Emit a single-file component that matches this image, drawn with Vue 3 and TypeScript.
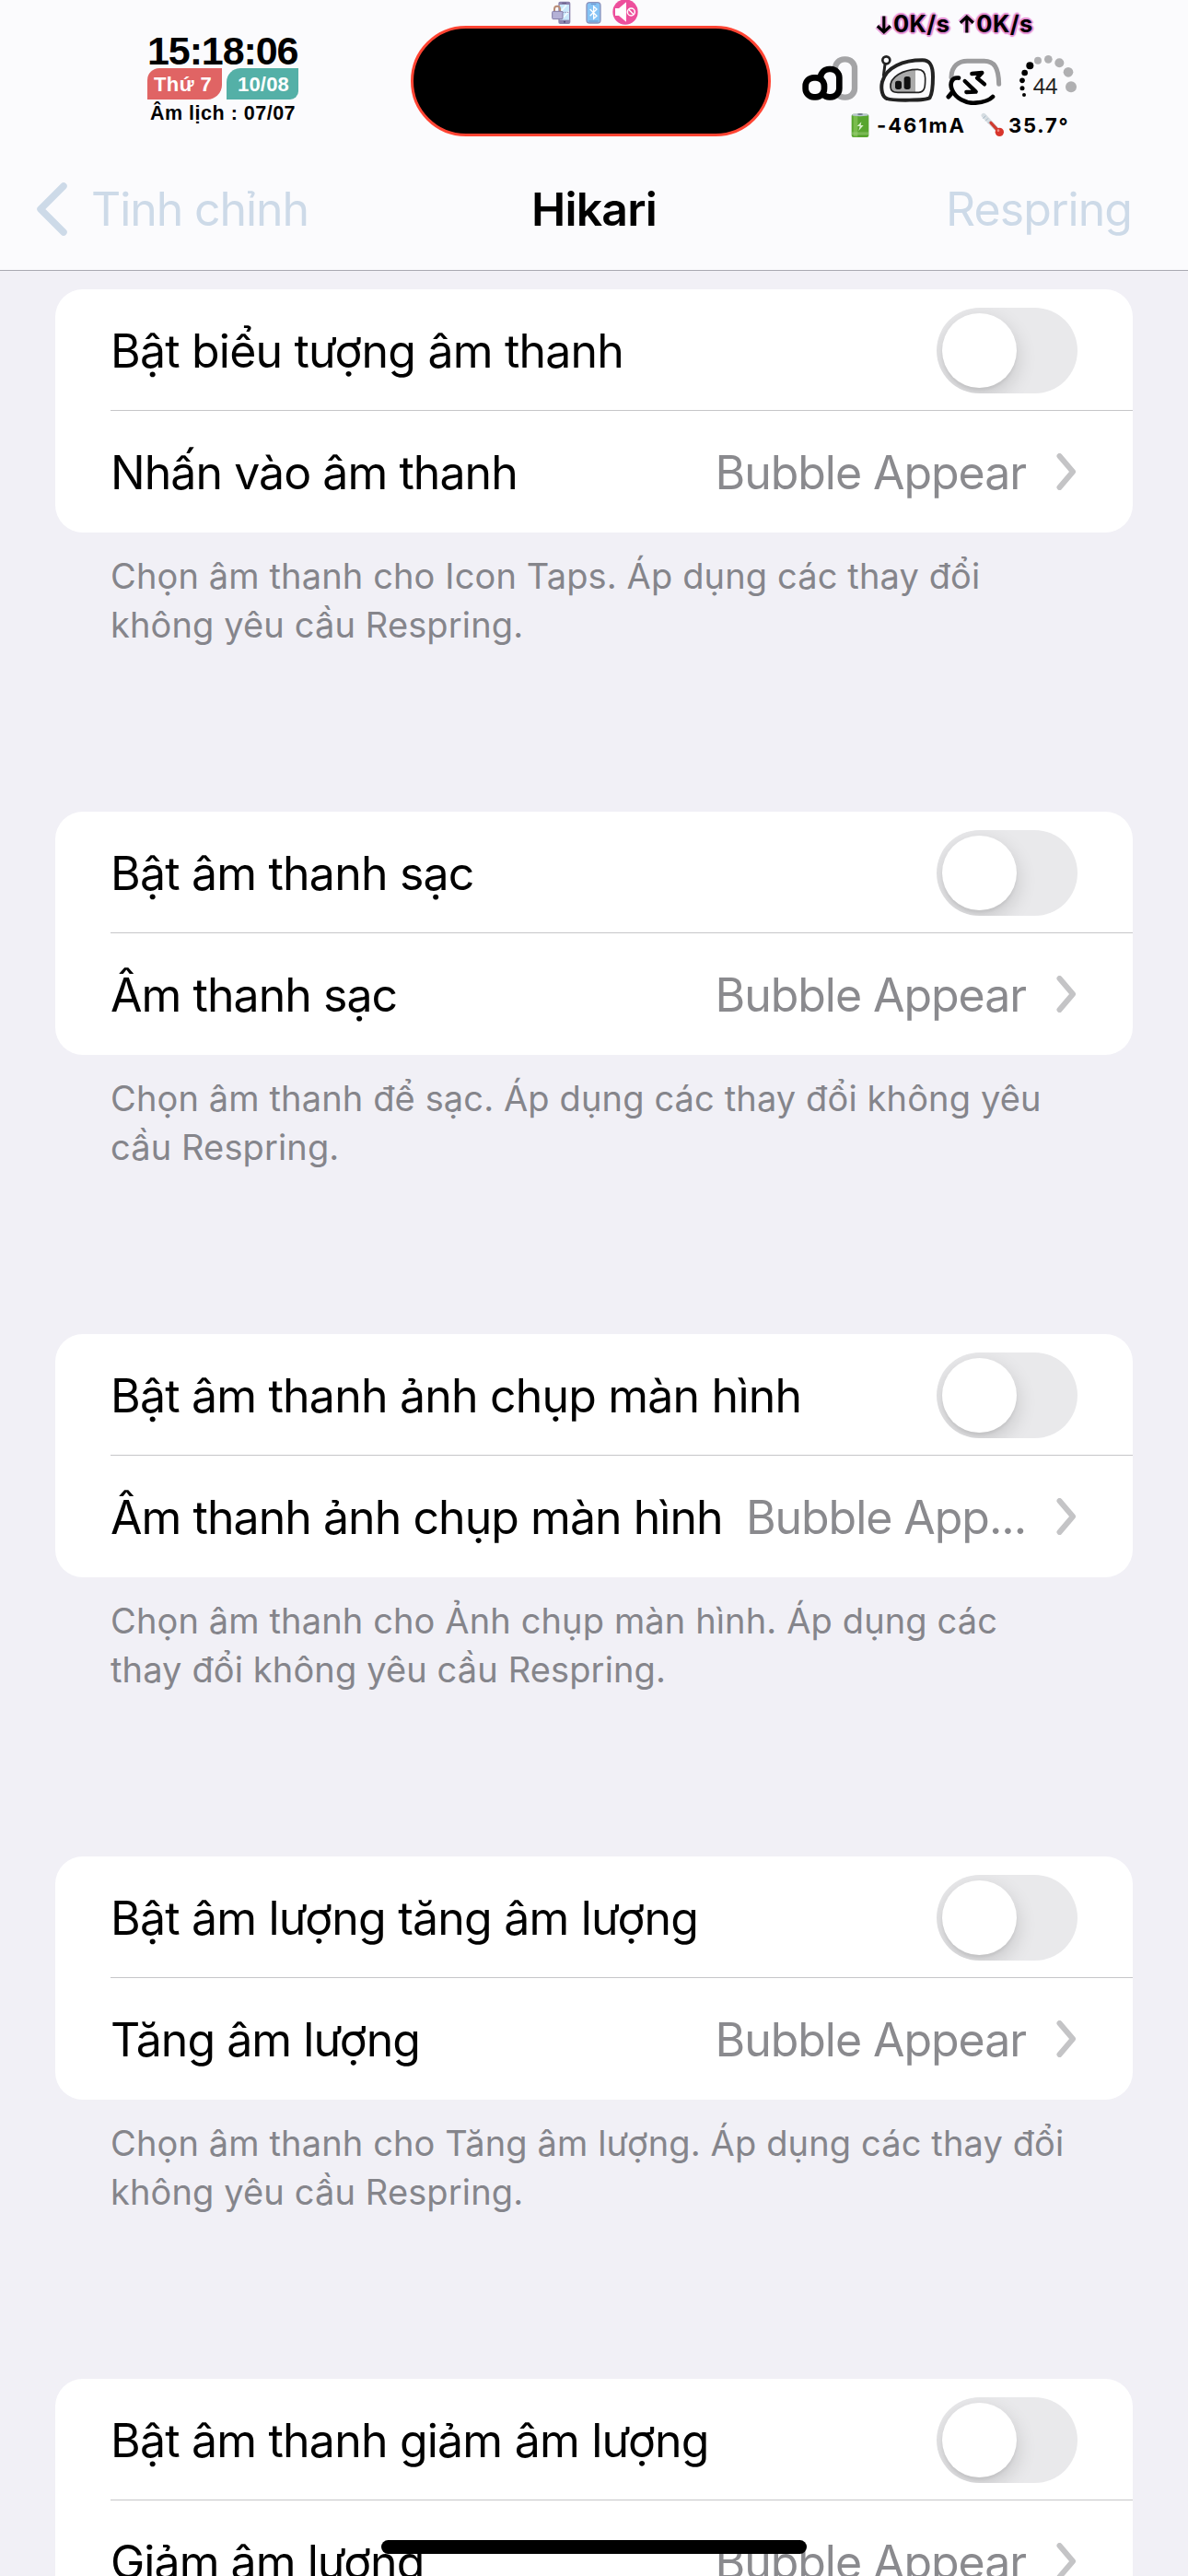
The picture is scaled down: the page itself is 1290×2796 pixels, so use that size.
<script setup lang="ts">
interface SoundGroup {
  toggle: string
  picker: string
  value: string
  note: string[]
}

const groups: SoundGroup[] = [
  {
    toggle: 'Bật biểu tượng âm thanh',
    picker: 'Nhấn vào âm thanh',
    value: 'Bubble Appear',
    note: ['Chọn âm thanh cho Icon Taps. Áp dụng các thay đổi', 'không yêu cầu Respring.'],
  },
  {
    toggle: 'Bật âm thanh sạc',
    picker: 'Âm thanh sạc',
    value: 'Bubble Appear',
    note: ['Chọn âm thanh để sạc. Áp dụng các thay đổi không yêu', 'cầu Respring.'],
  },
  {
    toggle: 'Bật âm thanh ảnh chụp màn hình',
    picker: 'Âm thanh ảnh chụp màn hình',
    value: 'Bubble App...',
    note: ['Chọn âm thanh cho Ảnh chụp màn hình. Áp dụng các', 'thay đổi không yêu cầu Respring.'],
  },
  {
    toggle: 'Bật âm lượng tăng âm lượng',
    picker: 'Tăng âm lượng',
    value: 'Bubble Appear',
    note: ['Chọn âm thanh cho Tăng âm lượng. Áp dụng các thay đổi', 'không yêu cầu Respring.'],
  },
  {
    toggle: 'Bật âm thanh giảm âm lượng',
    picker: 'Giảm âm lượng',
    value: 'Bubble Appear',
    note: [],
  },
]

interface Dot {
  x: number
  y: number
  r: number
  on: boolean
}

const dots: Dot[] = [
  { x: 15, y: 129, r: 6, on: true },
  { x: 9, y: 107, r: 7.5, on: true },
  { x: 9, y: 82, r: 8.5, on: true },
  { x: 17, y: 57, r: 10, on: true },
  { x: 34, y: 34, r: 12, on: true },
  { x: 60, y: 17, r: 12, on: false },
  { x: 94, y: 13, r: 13, on: false },
  { x: 130, y: 25, r: 15, on: false },
  { x: 159, y: 55, r: 16, on: false },
  { x: 168, y: 103, r: 18, on: false },
]
</script>

<template>
  <div class="screen">
    <header class="header">
      <div class="status">
        <div class="clock">
          <div class="time">15:18:06</div>
          <div class="badges">
            <span class="badge red">Thứ 7</span>
            <span class="badge teal">10/08</span>
          </div>
          <div class="lunar">Âm lịch : 07/07</div>
        </div>

        <div class="center">
          <div class="mini">
            <svg width="21" height="26" viewBox="0 0 63 78">
              <rect x="22" y="2" width="39" height="73" rx="6" fill="#8d84ae" />
              <rect x="26" y="12" width="31" height="50" fill="#c9e8fb" />
              <path d="M30 34L48 14M38 54L56 34" stroke="#f2faff" stroke-width="5" />
              <path d="M30 37h26" stroke="#8d84ae" stroke-width="3" stroke-dasharray="4 3" />
              <path d="M34 7h14" stroke="#5f5883" stroke-width="3" />
              <circle cx="42" cy="68" r="3" fill="#4f4a78" />
              <path d="M9 34v-8a9 9 0 0 1 18 0v8" fill="none" stroke="#b98e78" stroke-width="6" />
              <rect x="2" y="34" width="34" height="25" rx="3" fill="#b4b1d6" stroke="#827ba6" stroke-width="3" />
            </svg>
            <svg width="17" height="24" viewBox="0 0 51 72">
              <rect x="3" y="2" width="45" height="67" rx="10" fill="#85c3f5" stroke="#8b93bd" stroke-width="4" />
              <path d="M17 7h17M10 63h31" stroke="#6d8fc4" stroke-width="3" />
              <path d="M14 24L36 46L26 55V15L36 24L14 46" fill="none" stroke="#fff" stroke-width="4" />
            </svg>
            <svg width="28" height="28" viewBox="0 0 84 84">
              <circle cx="42" cy="39" r="41" fill="#ed4f9c" />
              <path d="M9 27h12L45 7v64L21 51H9z" fill="#fff" />
              <circle cx="61" cy="39" r="12" fill="none" stroke="#fff" stroke-width="4.5" />
              <path d="M53 31l16 16" stroke="#fff" stroke-width="4.5" />
            </svg>
          </div>
          <div class="island"></div>
        </div>

        <div class="meters">
          <div class="speed">
            <svg width="20" height="23" viewBox="0 0 57 66"><path d="M28 7v50M8 38l20 19l20-19" class="halo" /><path d="M28 7v50M8 38l20 19l20-19" class="arrow" /></svg><span>0K/s</span>
            <svg class="up" width="20" height="23" viewBox="0 0 57 66"><path d="M28 59V9M8 28L28 9l20 19" class="halo" /><path d="M28 59V9M8 28L28 9l20 19" class="arrow" /></svg><span>0K/s</span>
          </div>
          <div class="glyphs">
            <svg width="61" height="50" viewBox="0 0 183 150">
              <rect x="108" y="13" width="63" height="124" rx="29" fill="none" stroke="#a4a4a6" stroke-width="19" />
              <rect x="60" y="45" width="61" height="91" rx="28" fill="#fbfbfd" stroke="#000" stroke-width="20" />
              <rect x="11" y="73" width="61" height="63" rx="27" fill="#fbfbfd" stroke="#000" stroke-width="20" />
            </svg>
            <svg width="60" height="52" viewBox="0 0 180 156">
              <circle cx="22" cy="16" r="12" fill="none" stroke="#222" stroke-width="8" />
              <path d="M18 28L13 68" stroke="#222" stroke-width="9" />
              <path d="M9 86C22 38 78 16 140 16C166 16 174 36 174 70C174 102 171 127 164 138C154 148 42 148 24 141C10 136 3 112 9 86Z" fill="none" stroke="#222" stroke-width="12" />
              <path d="M36 104C33 68 78 51 117 46V121H60C43 121 37 116 36 104Z" fill="#aaa" />
              <path d="M36 104C33 70 78 46 124 46C140 46 149 54 149 74C149 96 150 121 128 121H60C43 121 37 116 36 104Z" fill="none" stroke="#222" stroke-width="5" />
              <rect x="51" y="83" width="21" height="28" rx="8" fill="#111" />
              <rect x="80" y="69" width="21" height="42" rx="8" fill="#111" />
            </svg>
            <svg width="62" height="54" viewBox="0 0 186 162">
              <path d="M18 72C18 34 43 19 70 19H125C157 19 172 39 173 94" fill="none" stroke="#9b9b9d" stroke-width="15" stroke-linecap="round" />
              <g fill="none" stroke="#000" stroke-linecap="round" stroke-linejoin="round">
                <path d="M42 74C20 70 12 91 20 111C31 140 65 158 97 155C122 153 143 146 153 135" stroke-width="14" />
                <path d="M9 135L20 122" stroke-width="15" />
                <path d="M85 60L118 57L102 74L126 94" stroke-width="13" />
                <path d="M62 84L98 119L67 120" stroke-width="13" />
              </g>
            </svg>
            <svg width="63" height="48" viewBox="0 0 189 144">
              <circle v-for="(d, i) in dots" :key="i" :cx="d.x" :cy="d.y" :r="d.r" :fill="d.on ? '#000' : '#b0b0b2'" />
              <text x="84" y="127" text-anchor="middle" font-family="Noto Sans, sans-serif" font-size="70" fill="#222">44</text>
            </svg>
          </div>
          <div class="power">
            <svg width="20" height="28" viewBox="0 0 60 84">
              <rect x="2" y="5" width="56" height="76" rx="6" fill="#58a52f" />
              <rect x="8" y="7" width="14" height="72" fill="#79bc4d" />
              <ellipse cx="30" cy="8" rx="27" ry="5" fill="#b9c7cf" />
              <ellipse cx="30" cy="6" rx="9" ry="3" fill="#6d7c86" />
              <path d="M34 31L20 45h9l-4 15l16-18h-9z" fill="#d9efcb" />
              <path d="M3 66h54M3 71h54" stroke="#a7d389" stroke-width="2" />
            </svg>
            <span class="amp">-461mA</span>
            <svg width="28" height="28" viewBox="0 0 84 84">
              <path d="M12 10L52 52" stroke="#d6dde2" stroke-width="15" stroke-linecap="round" />
              <path d="M10 20l9-9M18 28l9-9M26 36l9-9" stroke="#90a6b6" stroke-width="2" />
              <path d="M36 34L60 60" stroke="#cf3c31" stroke-width="10" stroke-linecap="round" />
              <circle cx="64" cy="64" r="14" fill="#d8352c" />
              <circle cx="60" cy="59" r="4" fill="#f08a80" />
            </svg>
            <span class="temp">35.7°</span>
          </div>
        </div>
      </div>

      <nav class="nav">
        <div class="back">
          <svg width="34" height="58" viewBox="0 0 34 58">
            <path d="M30 4L5 29L30 54" fill="none" stroke="#cddae8" stroke-width="7.5" stroke-linecap="round" stroke-linejoin="round" />
          </svg>
          <span>Tinh chỉnh</span>
        </div>
        <h1>Hikari</h1>
        <span class="action">Respring</span>
      </nav>
    </header>

    <main class="list">
      <section v-for="g in groups" :key="g.toggle" class="group">
        <div class="card">
          <div class="row first">
            <span class="label">{{ g.toggle }}</span>
            <span class="switch"><i></i></span>
          </div>
          <div class="row second">
            <span class="label">{{ g.picker }}</span>
            <span class="value">{{ g.value }}</span>
            <svg width="22" height="40" viewBox="0 0 22 40">
              <path d="M3.5 3L18 20L3.5 37" fill="none" stroke="#c4c4c6" stroke-width="6" stroke-linecap="round" stroke-linejoin="round" />
            </svg>
          </div>
        </div>
        <p class="note">
          <span v-for="line in g.note" :key="line">{{ line }}</span>
        </p>
      </section>
    </main>

    <div class="home"></div>
  </div>
</template>

<style>
body {
  margin: 0;
  overflow: hidden;
}
</style>

<style scoped>
.screen {
  position: relative;
  width: 1290px;
  height: 2796px;
  overflow: hidden;
  background: #f1f0f6;
  font-family: Inter, 'Liberation Sans', sans-serif;
  color: #000;
}
.header {
  box-sizing: border-box;
  height: 294px;
  background: #fbfbfd;
  border-bottom: 1px solid #a9a9b1;
}
.status {
  display: flex;
  height: 172px;
}
.clock {
  width: 286px;
  padding-left: 160px;
  font-family: 'Liberation Sans', Arial, sans-serif;
  font-weight: 700;
  white-space: nowrap;
}
.time {
  height: 40px;
  margin-top: 34px;
  font-size: 43px;
  line-height: 43px;
  letter-spacing: -1.1px;
}
.badges {
  display: flex;
  gap: 5px;
  height: 34px;
}
.badge {
  box-sizing: border-box;
  height: 34px;
  color: #fff;
  font-size: 22px;
  line-height: 35px;
}
.red {
  width: 81px;
  padding-left: 7px;
  background: #e06464;
  border-radius: 13px 0 16px 0;
  letter-spacing: 0.4px;
}
.teal {
  width: 78px;
  padding-left: 12px;
  background: #54b0a7;
  border-radius: 15px 0 9px 0;
  letter-spacing: 0.2px;
}
.lunar {
  margin-top: 3px;
  padding-left: 3px;
  font-size: 21.5px;
  line-height: 25px;
  letter-spacing: 0.5px;
}
.center {
  width: 391px;
}
.mini {
  display: flex;
  align-items: center;
  height: 28px;
  padding-left: 153px;
}
.mini svg:nth-child(2) {
  margin-left: 16px;
}
.mini svg:nth-child(3) {
  margin-left: 12px;
}
.island {
  box-sizing: border-box;
  width: 391px;
  height: 120px;
  background: #000;
  border: 3.5px solid #ff4433;
  border-radius: 60px;
}
.meters {
  flex: 1;
}
.speed {
  display: flex;
  align-items: center;
  height: 30px;
  margin: 11px 0 0 113px;
  font-size: 25.5px;
  font-weight: 700;
  line-height: 30px;
  text-shadow: 0 0 2px #e27fcf, 2px 0 1px #e58fd4, -2px 0 1px #e58fd4, 0 2px 1px #e58fd4, 0 -2px 1px #e58fd4,
    1px 1px 2px #e27fcf, -1px -1px 2px #e27fcf;
}
.speed span {
  letter-spacing: 0.4px;
}
.up {
  margin-left: 9px;
}
.arrow {
  fill: none;
  stroke: #000;
  stroke-width: 9;
}
.halo {
  fill: none;
  stroke: #e58fd4;
  stroke-width: 20;
  opacity: 0.8;
}
.glyphs {
  display: flex;
  align-items: flex-start;
  height: 62px;
  margin: 19px 0 0 34px;
}
.glyphs svg {
  flex: none;
}
.glyphs svg:nth-child(2) {
  margin-left: 23px;
}
.glyphs svg:nth-child(3) {
  margin: 0 0 0 12px;
}
.glyphs svg:nth-child(4) {
  margin-left: 18px;
}
.power {
  display: flex;
  align-items: center;
  height: 28px;
  margin-left: 87px;
  font-size: 22px;
  font-weight: 700;
  line-height: 28px;
}
.amp {
  width: 97px;
  margin-left: 8px;
  letter-spacing: 1.9px;
}
.power svg:nth-of-type(2) {
  margin-left: 15px;
}
.temp {
  margin-left: 3px;
  letter-spacing: 1.8px;
}
.nav {
  display: grid;
  grid-template-columns: 1fr auto 1fr;
  align-items: center;
  height: 110px;
  padding: 0 61px 0 39px;
  font-size: 50px;
  line-height: 60px;
  letter-spacing: -0.95px;
  color: #cddae8;
}
.back {
  display: flex;
  align-items: center;
}
.back span {
  margin-left: 26px;
  letter-spacing: -1.1px;
}
.nav h1 {
  margin: 0 0 0 22px;
  color: #000;
  font-size: 50px;
  font-weight: 600;
  letter-spacing: -0.8px;
}
.action {
  justify-self: end;
}
.list {
  padding: 20px 60px 0;
}
.group {
  height: 567px;
}
.card {
  height: 264px;
  background: #fff;
  border-radius: 30px;
}
.row {
  box-sizing: border-box;
  display: flex;
  align-items: center;
  height: 132px;
  margin-left: 60px;
  padding-right: 60px;
  font-size: 50px;
  line-height: 60px;
  letter-spacing: -0.8px;
  white-space: nowrap;
}
.first {
  border-bottom: 1px solid #c6c6c8;
}
.second {
  letter-spacing: -0.95px;
}
.label {
  flex: 1;
  padding-top: 2px;
}
.value {
  margin-right: 33px;
  padding-top: 2px;
  color: #8a8a8e;
  letter-spacing: -1.05px;
}
.row > svg {
  margin-right: 1px;
}
.switch {
  width: 153px;
  height: 93px;
  margin-top: 2px;
  border-radius: 47px;
  background: #e9e9eb;
  overflow: hidden;
}
.switch i {
  display: block;
  width: 81px;
  height: 81px;
  margin: 6px;
  border-radius: 50%;
  background: #fff;
  box-shadow: 0 8px 22px rgba(0, 0, 0, 0.16), 0 3px 3px rgba(0, 0, 0, 0.05);
}
.note {
  display: flex;
  flex-direction: column;
  margin: 0;
  padding: 21px 0 0 60px;
  color: #85858b;
  font-size: 38px;
  line-height: 53px;
  letter-spacing: 0.13px;
  white-space: nowrap;
}
.home {
  position: absolute;
  left: 414px;
  bottom: 24px;
  width: 462px;
  height: 15px;
  border-radius: 8px;
  background: #000;
}
</style>
